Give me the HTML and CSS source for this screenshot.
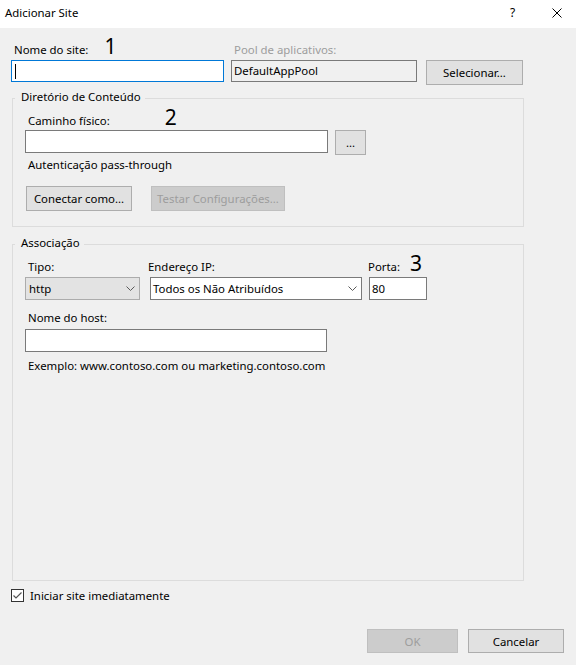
FILE: index.html
```html
<!DOCTYPE html>
<html lang="pt">
<head>
<meta charset="utf-8">
<title>Adicionar Site</title>
<link rel="stylesheet" href="styles.css">
</head>
<body>
<div class="dialog">
  <header class="titlebar">
    <span class="title">Adicionar Site</span>
    <span class="help">?</span>
    <span class="close"><svg width="10" height="10" viewBox="0 0 10 10"><path d="M0.5 0.5L9.5 9.5M9.5 0.5L0.5 9.5" stroke="#000" stroke-width="1" fill="none"/></svg></span>
  </header>
  <main class="content">
    <div class="site-row">
      <div class="col col-name">
        <div class="lbl">Nome do site:<span class="num num1">1</span></div>
        <div class="field field-name focus"><span class="caret"></span></div>
      </div>
      <div class="col col-pool">
        <div class="lbl muted">Pool de aplicativos:</div>
        <div class="field field-pool readonly">DefaultAppPool</div>
      </div>
      <div class="col col-sel">
        <div class="lbl"></div>
        <button class="btn btn-sel" type="button">Selecionar...</button>
      </div>
    </div>

    <fieldset class="group group-dir">
      <legend>Diretório de Conteúdo</legend>
      <div class="lbl">Caminho físico:<span class="num num2">2</span></div>
      <div class="path-row">
        <div class="field field-path"></div>
        <button class="btn btn-dots" type="button">...</button>
      </div>
      <div class="lbl auth">Autenticação pass-through</div>
      <div class="btn-row">
        <button class="btn btn-con" type="button">Conectar como...</button>
        <button class="btn btn-test" type="button" disabled>Testar Configurações...</button>
      </div>
    </fieldset>

    <fieldset class="group group-bind">
      <legend>Associação</legend>
      <div class="bind-row">
        <div class="col col-tipo">
          <div class="lbl">Tipo:</div>
          <div class="select select-gray">http<svg class="chev" width="9" height="5" viewBox="0 0 9 5"><path d="M0.5 0.5L4.5 4.5L8.5 0.5" stroke="#5a5a5a" stroke-width="1" fill="none"/></svg></div>
        </div>
        <div class="col col-ip">
          <div class="lbl lbl-ip">Endereço IP:</div>
          <div class="select select-white">Todos os Não Atribuídos<svg class="chev" width="9" height="5" viewBox="0 0 9 5"><path d="M0.5 0.5L4.5 4.5L8.5 0.5" stroke="#5a5a5a" stroke-width="1" fill="none"/></svg></div>
        </div>
        <div class="col col-porta">
          <div class="lbl lbl-porta">Porta:<span class="num num3">3</span></div>
          <div class="field field-porta">80</div>
        </div>
      </div>
      <div class="lbl host-lbl">Nome do host:</div>
      <div class="field field-host"></div>
      <div class="lbl example">Exemplo: www.contoso.com ou marketing.contoso.com</div>
    </fieldset>

    <label class="check-row">
      <svg class="checkbox" width="13" height="13" viewBox="0 0 13 13"><rect x="0.5" y="0.5" width="12" height="12" fill="#fff" stroke="#333" stroke-width="1"/><path d="M2.5 6.5L5 9L10.5 3.5" stroke="#555" stroke-width="1.2" fill="none"/></svg>
      <span class="check-text">Iniciar site imediatamente</span>
    </label>

    <div class="footer">
      <button class="btn btn-ok" type="button" disabled>OK</button>
      <button class="btn btn-cancel" type="button">Cancelar</button>
    </div>
  </main>
</div>
</body>
</html>
```
FILE: styles.css
```css
* { box-sizing: border-box; }
html, body { margin: 0; padding: 0; }
body {
  width: 576px;
  height: 665px;
  overflow: hidden;
  background: #f0f0f0;
  font-family: "Noto Sans", "Open Sans", sans-serif;
  font-size: 11.4px;
  line-height: 15px;
  color: #000;
}

/* title bar */
.titlebar {
  height: 28px;
  background: #fff;
  display: flex;
  padding: 5px 0 0 5px;
}
.help { margin-left: auto; width: 8px; font-size: 12px; }
.close { margin-left: 34px; margin-right: 14px; width: 10px; padding-top: 3px; }
.close svg { display: block; }

/* content */
.content { padding: 14px 12px 0 11px; }

.lbl { height: 15px; padding-left: 3px; white-space: nowrap; }
.muted { color: #9d9d9d; }
.num { font-size: 21px; line-height: 1px; }
.num1 { margin-left: 16px; }
.num2 { margin-left: 55px; }
.num3 { margin-left: 10px; }

.field {
  background: #fff;
  border: 1px solid #7a7a7a;
  padding: 0 2px;
  line-height: 21px;
  white-space: nowrap;
}
.focus { border-color: #0078d7; }
.readonly { background: #f0f0f0; }
.caret { display: inline-block; width: 1px; height: 15px; background: #000; vertical-align: middle; margin-left: 1px; }

.btn {
  font: inherit;
  color: #000;
  background: #e1e1e1;
  border: 1px solid #adadad;
  padding: 0;
  margin: 0;
  height: 25px;
  line-height: 15px;
  text-align: center;
  border-radius: 0;
}
.btn:disabled { background: #cccccc; border-color: #bfbfbf; color: #9d9d9d; }

/* top row */
.site-row { display: flex; align-items: flex-start; }
.col { display: flex; flex-direction: column; }
.col-name { width: 213px; }
.col-pool { width: 186px; margin-left: 7px; }
.col-sel { width: 97px; margin-left: 9px; }
.field-name, .field-pool { height: 22px; margin-top: 3px; line-height: 20px; }
.btn-sel { margin-top: 3px; width: 97px; }

/* group boxes */
.group {
  margin: 4px 0 0 1px;
  width: 512px;
  min-width: 0;
  border: 1px solid #dcdcdc;
  padding: 5px 12px 15px 12px;
}
.group legend {
  padding: 0 4px 4px 6px;
  margin-left: -10px;
  line-height: 15px;
}
.group-bind { margin-top: 8px; height: 346px; }

.path-row { display: flex; align-items: flex-start; margin-top: 2px; }
.field-path { width: 303px; height: 23px; }
.btn-dots { width: 31px; margin-left: 7px; }
.auth { margin-top: 2px; }
.btn-row { display: flex; margin-top: 14px; }
.btn-con { width: 106px; margin-left: 1px; }
.btn-test { width: 134px; margin-left: 19px; }

.bind-row { display: flex; align-items: flex-start; }
.col-tipo { width: 115px; }
.col-ip { width: 212px; margin-left: 10px; }
.col-porta { width: 58px; margin-left: 7px; }
.lbl-ip { padding-left: 0; margin-left: -2px; }
.lbl-porta { padding-left: 0; margin-left: -1px; }

.select {
  margin-top: 3px;
  height: 23px;
  display: flex;
  align-items: center;
  justify-content: space-between;
  padding: 0 4px 0 2px;
  border: 1px solid #7a7a7a;
  background: #fff;
  white-space: nowrap;
}
.select-gray { background: #e3e3e3; border-color: #acacac; padding-left: 3px; }
.chev { display: block; flex: none; }
.field-porta { margin-top: 3px; height: 23px; }

.host-lbl { margin-top: 10px; }
.field-host { margin-top: 4px; width: 302px; height: 23px; }
.example { margin-top: 6px; }

/* checkbox */
.check-row { display: flex; align-items: center; height: 15px; margin-top: 7px; }
.checkbox { display: block; flex: none; }
.check-text { margin-left: 6px; }

/* footer */
.footer { display: flex; justify-content: flex-end; gap: 10px; margin-top: 26px; }
.footer .btn { height: 24px; }
.btn-ok { width: 91px; }
.btn-cancel { width: 96px; }
```
